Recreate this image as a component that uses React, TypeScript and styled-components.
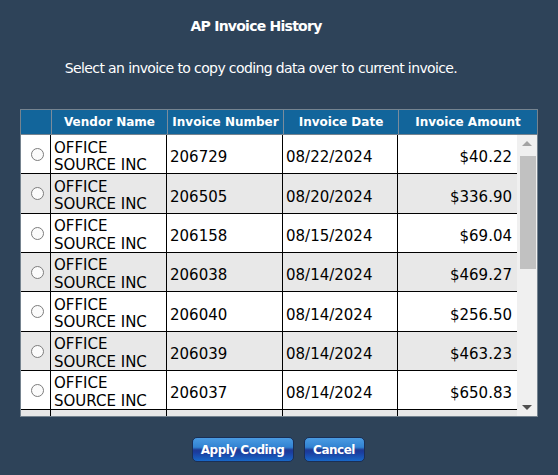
import React from 'react';
import styled, { createGlobalStyle } from 'styled-components';

interface Invoice {
  vendor: string;
  number: string;
  date: string;
  amount: string;
}

const invoices: Invoice[] = [
  { vendor: 'OFFICE SOURCE INC', number: '206729', date: '08/22/2024', amount: '$40.22' },
  { vendor: 'OFFICE SOURCE INC', number: '206505', date: '08/20/2024', amount: '$336.90' },
  { vendor: 'OFFICE SOURCE INC', number: '206158', date: '08/15/2024', amount: '$69.04' },
  { vendor: 'OFFICE SOURCE INC', number: '206038', date: '08/14/2024', amount: '$469.27' },
  { vendor: 'OFFICE SOURCE INC', number: '206040', date: '08/14/2024', amount: '$256.50' },
  { vendor: 'OFFICE SOURCE INC', number: '206039', date: '08/14/2024', amount: '$463.23' },
  { vendor: 'OFFICE SOURCE INC', number: '206037', date: '08/14/2024', amount: '$650.83' },
  { vendor: 'OFFICE SOURCE INC', number: '205911', date: '08/12/2024', amount: '$118.45' },
  { vendor: 'OFFICE SOURCE INC', number: '205870', date: '08/09/2024', amount: '$92.10' },
];

const GlobalStyle = createGlobalStyle`
  html, body {
    margin: 0;
    padding: 0;
    background: #2e4359;
  }
  body {
    font-family: "DejaVu Sans", Verdana, sans-serif;
  }
`;

const Dialog = styled.div`
  width: 558px;
  height: 475px;
  box-sizing: border-box;
  padding: 18px 20px 0;
  display: flex;
  flex-direction: column;
  color: #fff;
`;

const Title = styled.h1`
  margin: 0;
  padding-right: 46px;
  font-size: 14px;
  line-height: 16px;
  font-weight: bold;
  letter-spacing: -0.75px;
  text-align: center;
`;

const Instructions = styled.p`
  margin: 26px 0 33px;
  padding-right: 36px;
  font-size: 14px;
  line-height: 16px;
  letter-spacing: -0.62px;
  text-align: center;
`;

const Grid = styled.div`
  width: 518px;
  border: 1px solid #75838f;
  box-sizing: border-box;
  background: #fff;
`;

const HeadRow = styled.div`
  display: grid;
  grid-template-columns: 30px 116px 116px 115px 1fr;
  height: 24px;
  background: #12659b;
  border-bottom: 1px solid #75838f;
`;

const HeadCell = styled.div`
  display: flex;
  align-items: center;
  justify-content: center;
  font-size: 12px;
  font-weight: bold;
  color: #fff;
  white-space: nowrap;
  & + & {
    border-left: 1px solid #7a8c9c;
  }
`;

const Body = styled.div`
  display: flex;
  height: 281px;
`;

const Rows = styled.div`
  flex: 1;
  overflow: hidden;
`;

const Row = styled.div<{ $shaded: boolean }>`
  display: grid;
  grid-template-columns: 30px 116px 116px 115px 1fr;
  height: 39.33px;
  box-sizing: border-box;
  border-bottom: 1px solid #000;
  background: ${(p) => (p.$shaded ? '#e8e8e8' : '#fff')};
  color: #000;
  font-size: 15px;
  line-height: 17.5px;
`;

// single values sit a little below the middle of the row
const Cell = styled.div<{ $align?: 'left' | 'right' }>`
  display: flex;
  align-items: center;
  justify-content: ${(p) => (p.$align === 'right' ? 'flex-end' : 'flex-start')};
  padding: 8px ${(p) => (p.$align === 'right' ? '5px' : '0')} 0
    ${(p) => (p.$align === 'right' ? '0' : '3px')};
  border-right: 1px solid #000;
  white-space: nowrap;
  overflow: hidden;
  &:last-child {
    border-right: none;
  }
`;

// vendor names wrap onto two lines and fill the row
const VendorCell = styled.div`
  min-height: 0;
  padding: 0 0 0 3px;
  border-right: 1px solid #000;
`;

const VendorLine = styled.span`
  display: block;
  white-space: nowrap;
  &:first-child {
    margin-top: 4.5px;
  }
`;

const RadioCell = styled.div`
  display: flex;
  align-items: center;
  justify-content: center;
  border-right: 1px solid #000;
`;

const Radio = styled.input.attrs({ type: 'radio', name: 'invoice' })`
  appearance: none;
  width: 13px;
  height: 13px;
  margin: 1px 0 0 3px;
  border: 1px solid #7c7c7c;
  border-radius: 50%;
  background: #fbfbfb;
  box-sizing: border-box;
`;

const ScrollTrack = styled.div`
  width: 20px;
  background: #f0f0f0;
  display: flex;
  flex-direction: column;
  align-items: center;
`;

const ScrollButton = styled.div`
  height: 17px;
  width: 100%;
  display: flex;
  align-items: center;
  justify-content: center;
`;

const Arrow = styled.span<{ $dir: 'up' | 'down'; $active: boolean }>`
  width: 0;
  height: 0;
  border-left: 5px solid transparent;
  border-right: 5px solid transparent;
  ${(p) =>
    p.$dir === 'up'
      ? `border-bottom: 5px solid ${p.$active ? '#505050' : '#a3a3a3'};`
      : `border-top: 5px solid ${p.$active ? '#505050' : '#a3a3a3'};`}
`;

const Thumb = styled.div`
  width: 16px;
  height: 113px;
  margin: 4px 0 0 1px;
  background: #c1c1c1;
`;

const Spacer = styled.div`
  flex: 1;
`;

const Actions = styled.div`
  display: flex;
  justify-content: center;
  gap: 10px;
  margin-top: 20px;
  padding-right: 2px;
`;

const Button = styled.button`
  height: 25px;
  padding: 0;
  border: 1px solid #1a2f55;
  border-radius: 5px;
  background: linear-gradient(
    to bottom,
    #4a9be2 0%,
    #3283d2 40%,
    #1e3a94 52%,
    #1b3c9e 62%,
    #1868c8 100%
  );
  color: #fff;
  font-family: "DejaVu Sans", Verdana, sans-serif;
  font-size: 12px;
  font-weight: bold;
  letter-spacing: -0.5px;
  white-space: nowrap;
  cursor: pointer;
`;

const ApplyButton = styled(Button)`
  width: 102px;
`;

const CancelButton = styled(Button)`
  width: 61px;
`;

export default function App() {
  return (
    <>
      <GlobalStyle />
      <Dialog>
        <Title>AP Invoice History</Title>
        <Instructions>Select an invoice to copy coding data over to current invoice.</Instructions>
        <Grid>
          <HeadRow>
            <HeadCell />
            <HeadCell>Vendor Name</HeadCell>
            <HeadCell>Invoice Number</HeadCell>
            <HeadCell>Invoice Date</HeadCell>
            <HeadCell>Invoice Amount</HeadCell>
          </HeadRow>
          <Body>
            <Rows>
              {invoices.map((inv, i) => {
                const [first, ...rest] = inv.vendor.split(' ');
                return (
                  <Row key={inv.number} $shaded={i % 2 === 1}>
                    <RadioCell>
                      <Radio />
                    </RadioCell>
                    <VendorCell>
                      <VendorLine>{first}</VendorLine>
                      <VendorLine>{rest.join(' ')}</VendorLine>
                    </VendorCell>
                    <Cell>{inv.number}</Cell>
                    <Cell>{inv.date}</Cell>
                    <Cell $align="right">{inv.amount}</Cell>
                  </Row>
                );
              })}
            </Rows>
            <ScrollTrack>
              <ScrollButton>
                <Arrow $dir="up" $active={false} />
              </ScrollButton>
              <Thumb />
              <Spacer />
              <ScrollButton>
                <Arrow $dir="down" $active />
              </ScrollButton>
            </ScrollTrack>
          </Body>
        </Grid>
        <Actions>
          <ApplyButton>Apply Coding</ApplyButton>
          <CancelButton>Cancel</CancelButton>
        </Actions>
      </Dialog>
    </>
  );
}
